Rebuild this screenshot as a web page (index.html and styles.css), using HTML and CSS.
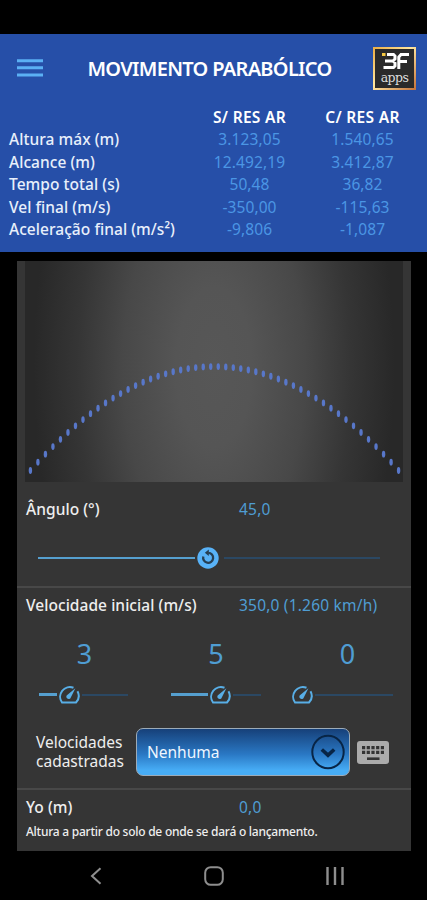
FILE: index.html
```html
<!DOCTYPE html>
<html lang="pt-BR">
<head>
	<meta charset="utf-8">
	<title>Movimento Parabólico</title>
	<link rel="stylesheet" href="styles.css">
</head>
<body>
	<header class="header">
		<div class="topbar">
			<svg class="menu" width="26" height="18" viewBox="0 0 26 18">
				<path d="M0 1.7h26M0 8.8h26M0 15.9h26" stroke="#5bb0f4" stroke-width="3"/>
			</svg>
			<h1>MOVIMENTO PARABÓLICO</h1>
			<div class="logo">
				<svg width="30" height="20" viewBox="0 0 30 20">
					<path d="M2 3.5h3.5" stroke="#f5c842" stroke-width="3"/>
					<path d="M7 3.500h6.500l1.500 1.500v3l-2 2H5M13 10l2 2v3l-1.500 1.500H3.500" fill="none" stroke="#fff" stroke-width="3"/>
					<path d="M29 3.500h-8l-2.200 2.500v12M19 10.500h8" fill="none" stroke="#fff" stroke-width="3"/>
				</svg>
				<span>apps</span>
			</div>
		</div>
		<div class="results">
			<span></span><b>S/ RES AR</b><b>C/ RES AR</b>
			<span>Altura máx (m)</span><i>3.123,05</i><i>1.540,65</i>
			<span>Alcance (m)</span><i>12.492,19</i><i>3.412,87</i>
			<span>Tempo total (s)</span><i>50,48</i><i>36,82</i>
			<span>Vel final (m/s)</span><i>-350,00</i><i>-115,63</i>
			<span>Aceleração final (m/s²)</span><i>-9,806</i><i>-1,087</i>
		</div>
	</header>

	<main class="panel">
		<svg class="chart" id="chart" width="378" height="221" viewBox="0 0 378 221"></svg>

		<section class="angle">
			<div class="field"><label>Ângulo (°)</label><output>45,0</output></div>
			<div class="slider">
				<span class="on"></span>
				<svg width="22" height="22" viewBox="0 0 22 22">
					<circle cx="11" cy="11" r="10.700" fill="#58b2f7"/>
					<path d="M6.300 9.500a5 5 0 1 0 5-3.700" fill="none" stroke="#263f53" stroke-width="2.300"/>
					<path d="M11.800 2.500v6.600L7.800 5.800z" fill="#263f53"/>
				</svg>
				<span class="off"></span>
			</div>
		</section>

		<section class="speed">
			<div class="field"><label>Velocidade inicial (m/s)</label><output>350,0 (1.260 km/h)</output></div>
			<div class="digits">
				<div class="digit three">
					<output>3</output>
					<div class="slider">
						<span class="on"></span>
						<svg width="22" height="19" viewBox="0 0 22 19"><use href="#gauge"/></svg>
						<span class="off"></span>
					</div>
				</div>
				<div class="digit five">
					<output>5</output>
					<div class="slider">
						<span class="on"></span>
						<svg width="22" height="19" viewBox="0 0 22 19"><use href="#gauge"/></svg>
						<span class="off"></span>
					</div>
				</div>
				<div class="digit zero">
					<output>0</output>
					<div class="slider">
						<svg width="22" height="19" viewBox="0 0 22 19"><use href="#gauge"/></svg>
						<span class="off"></span>
					</div>
				</div>
			</div>
			<div class="saved">
				<div class="saved-label">Velocidades cadastradas</div>
				<button class="select">
					<span>Nenhuma</span>
					<svg width="34" height="36" viewBox="0 0 34 36">
						<ellipse cx="17" cy="18" rx="15.700" ry="16.300" fill="none" stroke="#082546" stroke-width="2"/>
						<path d="M10.800 15.500l6.200 5.700 6.200-5.700" fill="none" stroke="#082546" stroke-width="3.600"/>
					</svg>
				</button>
				<svg width="32" height="23" viewBox="0 0 32 23">
					<rect width="32" height="23" rx="3" fill="#ababab"/>
					<path d="M5 6.700h22.500M5 11.300h22.500" stroke="#333" stroke-width="3.200" stroke-dasharray="3.200 1.500"/>
					<path d="M10 17.700h12.500" stroke="#333" stroke-width="2.600"/>
				</svg>
			</div>
		</section>

		<section class="height">
			<div class="field"><label>Yo (m)</label><output>0,0</output></div>
			<p>Altura a partir do solo de onde se dará o lançamento.</p>
		</section>
	</main>

	<nav class="navbar">
		<svg width="12" height="18" viewBox="0 0 12 18"><path d="M10.500 1.200L2 9l8.500 7.800" fill="none" stroke="#8e8e8e" stroke-width="2"/></svg>
		<svg width="20" height="20" viewBox="0 0 20 20"><rect x="1.200" y="1.200" width="17.600" height="17.600" rx="5.500" fill="none" stroke="#8e8e8e" stroke-width="2"/></svg>
		<svg width="18" height="18" viewBox="0 0 18 18"><path d="M1.500 0v18M9 0v18M16.500 0v18" stroke="#8e8e8e" stroke-width="2.400"/></svg>
	</nav>

	<svg class="defs" width="0" height="0">
		<symbol id="gauge" viewBox="0 0 22 19">
			<path d="M15.500 2.800A9.700 9.700 0 0 0 4 17.500h14A9.700 9.700 0 0 0 19.500 6.300" fill="none" stroke="#58aee6" stroke-width="2"/>
			<path d="M17.400 3.200l-4.600 9.200a2.300 2.300 0 1 1-3.600-2.500z" fill="#58aee6"/>
		</symbol>
	</svg>

	<script>
		const chart = document.getElementById('chart');
		const dots = 50;

		// one dot per time step of the trajectory
		for (let i = 0; i < dots; i++) {
			const t = i / (dots - 1) * 2 - 1;
			const dot = document.createElementNS('http://www.w3.org/2000/svg', 'ellipse');
			dot.setAttribute('cx', 189.500 + t * 184.100);
			dot.setAttribute('cy', 105.500 + t * t * 104);
			dot.setAttribute('rx', 1.700);
			dot.setAttribute('ry', 3.400);
			chart.appendChild(dot);
		}
	</script>
</body>
</html>
```

FILE: styles.css
```css
* {
	box-sizing: border-box;
}

body {
	margin: 0;
	padding-top: 34px;
	height: 900px;
	overflow: hidden;
	background: #000;
	color: #eee;
	font-family: "Noto Sans", sans-serif;
	font-size: 15.5px;
}

svg {
	display: block;
	flex: none;
}

.header {
	height: 218px;
	background: #264fa8;
	color: #e8effb;
}

.topbar {
	display: flex;
	align-items: center;
	height: 72px;
	padding: 0 11px 4px 17px;
}

.topbar h1 {
	flex: 1;
	margin: 0 0 0 3px;
	text-align: center;
	color: #fff;
	font-size: 20px;
	font-weight: 600;
	letter-spacing: -0.7px;
	white-space: nowrap;
}

.logo {
	display: flex;
	flex-direction: column;
	align-items: center;
	width: 43px;
	height: 43px;
	padding-top: 2px;
	border: 2.5px solid;
	border-image: linear-gradient(135deg, #ecae45, #ffe6a0 45%, #c5743c) 1;
	background: #2a2a2a;
}

.logo span {
	margin-top: -1px;
	color: #ddd;
	font: 12.5px/15px "DejaVu Serif", serif;
	letter-spacing: -0.6px;
}

.results {
	display: grid;
	grid-template-columns: 184px 113px 113px;
	grid-auto-rows: 22.4px;
	padding-left: 9px;
	line-height: 22px;
	white-space: nowrap;
}

.results span,
.field label {
	font-weight: 500;
	letter-spacing: 0.05px;
}

.results b,
.results i {
	width: 130px;
	justify-self: center;
	text-align: center;
	font-style: normal;
}

.results b {
	font-weight: 600;
	color: #fff;
	letter-spacing: 0.3px;
}

.results i {
	color: #4b96e4;
	letter-spacing: 0.1px;
}

.panel {
	width: 394px;
	height: 590px;
	margin: 9px 0 0 17px;
	background: #353535;
}

.chart {
	margin-left: 8px;
	background: radial-gradient(ellipse 190px 400px at 50% 48%, #575757, #555 20%, #484848 48%, #353535 72%, #282828 95%);
}

.chart ellipse {
	fill: #5877c9;
}

.field {
	display: grid;
	grid-template-columns: 213px 1fr;
	padding-left: 9px;
	line-height: 24px;
	white-space: nowrap;
}

output {
	color: #4f9dd3;
}

.field output {
	letter-spacing: 0.2px;
}

.angle {
	height: 104px;
	padding-top: 15px;
}

.slider {
	display: flex;
	align-items: center;
}

.on {
	height: 3px;
	background: #559fcf;
}

.off {
	height: 2px;
	background: #2b4863;
}

.angle .slider {
	margin: 26px 0 0 21px;
}

.angle .on {
	width: 157px;
	height: 2px;
	margin-right: 2px;
}

.angle .off {
	width: 156px;
	margin-left: 5px;
}

.speed {
	height: 202px;
	padding-top: 5px;
	border-top: 2px solid #484848;
}

.digits {
	display: flex;
	height: 111px;
	padding-top: 18px;
}

.digit {
	width: 131.5px;
}

.digit output {
	display: block;
	width: 135px;
	text-align: center;
	font-size: 27px;
	line-height: 38px;
}

.digit .slider {
	height: 19px;
	margin: 12px 0 0 22px;
}

.three .on {
	width: 18px;
	margin-right: 1px;
}

.three .off {
	width: 46px;
	margin-left: 2px;
}

.five .on {
	width: 37px;
	margin-right: 1px;
}

.five .off {
	width: 28px;
	margin-left: 2px;
}

.digit.zero .slider {
	margin-left: 11px;
}

.zero .off {
	width: 78px;
	margin-left: 2px;
}

.saved {
	display: flex;
	align-items: center;
	padding-left: 19px;
}

.saved-label {
	width: 92px;
	margin-right: 8px;
	line-height: 19px;
}

.select {
	display: flex;
	align-items: center;
	justify-content: space-between;
	width: 214px;
	height: 48px;
	margin-right: 7px;
	padding: 0 4px 0 10px;
	border: 1.5px solid #9cabb8;
	border-radius: 7px;
	background: linear-gradient(#164079, #2a78c4 55%, #47adf6 90%);
	color: #eef6ff;
	font: inherit;
}

.height {
	padding-top: 5px;
	border-top: 2px solid #484848;
}

.height p {
	margin: 4px 0 0 9px;
	font-size: 12px;
	font-weight: 500;
	line-height: 18px;
	letter-spacing: -0.25px;
	white-space: nowrap;
}

.navbar {
	display: flex;
	align-items: center;
	justify-content: space-between;
	height: 49px;
	padding: 0 83px 0 90px;
}

.defs {
	position: absolute;
}
```
